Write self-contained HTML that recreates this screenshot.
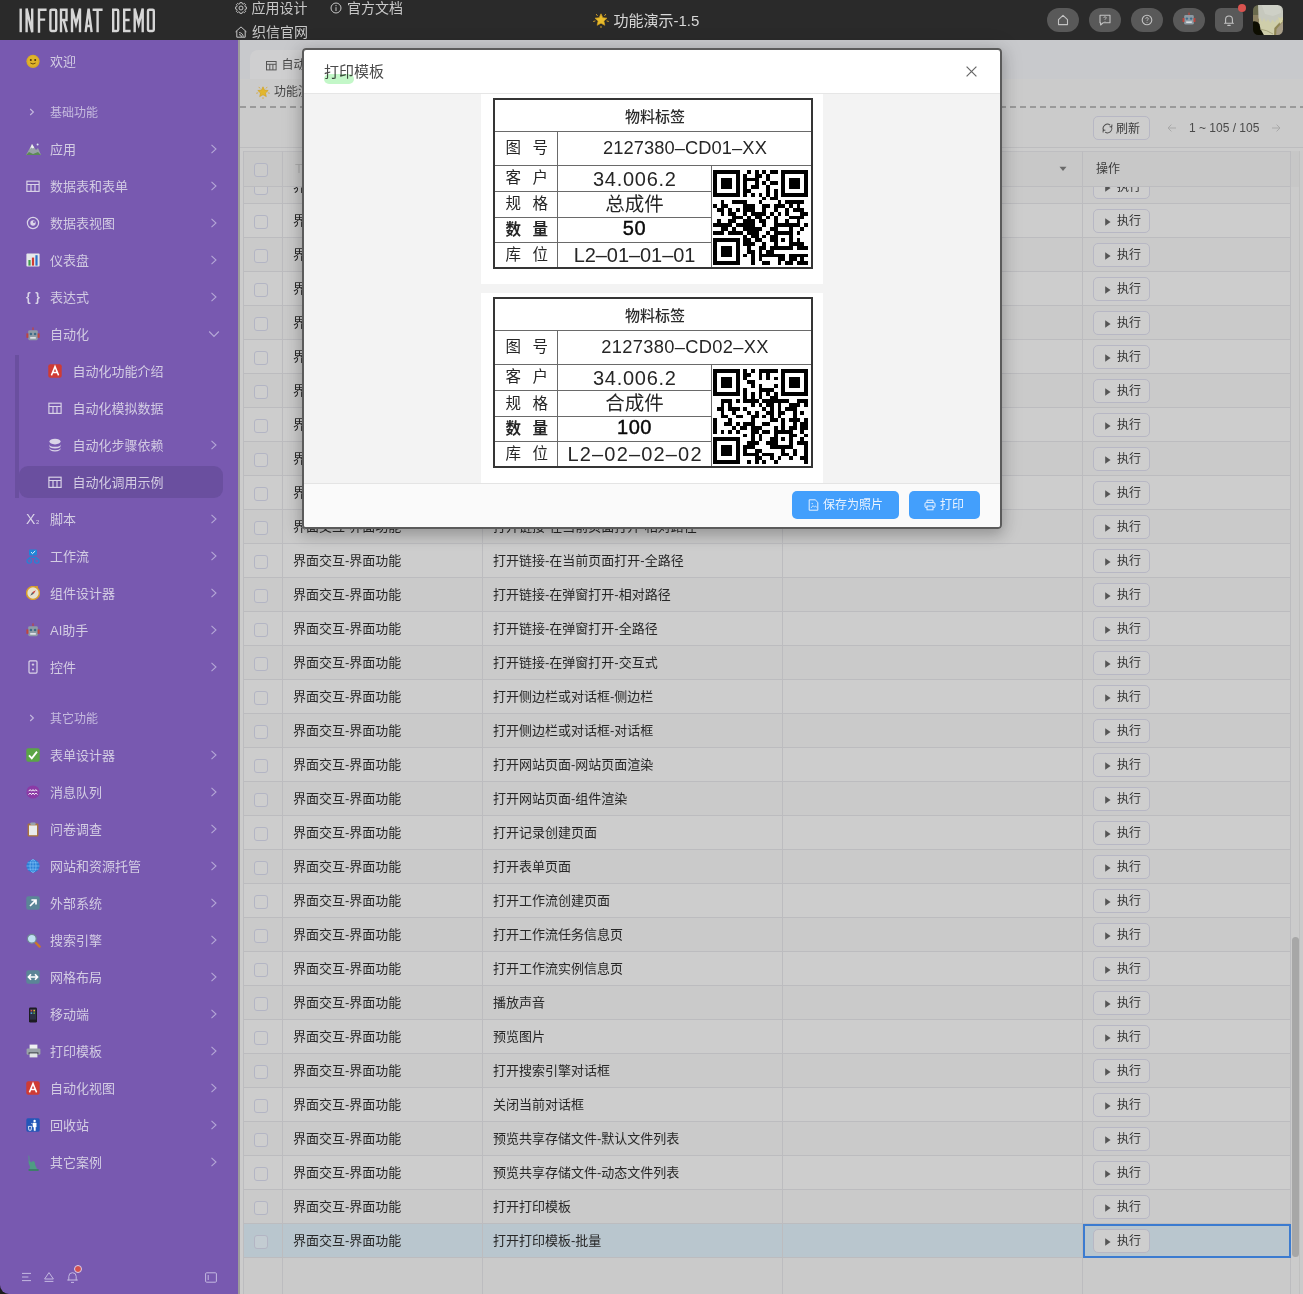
<!DOCTYPE html>
<html><head><meta charset="utf-8"><title>INFORMAT DEMO</title><style>
html,body{margin:0;padding:0}
body{width:1303px;height:1294px;position:relative;overflow:hidden;background:#cbcbcb;font-family:"Liberation Sans","Noto Sans CJK SC",sans-serif;}
div,svg{position:absolute;box-sizing:border-box}
.t{white-space:nowrap;overflow:hidden}
</style></head><body>
<div style="left:238px;top:40px;width:2px;height:1254px;background:#9d9b9b"></div>
<div style="left:240px;top:40px;width:1063px;height:67px;background:#c8c9cc"></div>
<div style="left:250px;top:50px;width:120px;height:29px;background:#cfcfd0;border-radius:8px 8px 0 0"></div>
<svg style="left:266px;top:60.5px;" width="11" height="10" viewBox="0 0 11 10"><g fill="none" stroke="#555" stroke-width="1"><rect x=".5" y=".5" width="9.6" height="8.4"/><path d="M.5 3.3h9.6M3.8 3.3v5.6M6.9 3.3v5.6"/></g></svg>
<div class="t" style="left:281.5px;top:55.5px;height:19px;line-height:19px;font-size:12px;color:#444;">自动化调用示例</div>
<div style="left:240px;top:79px;width:1063px;height:28px;background:#cbcbcb"></div>
<svg style="left:256px;top:85px;" width="14" height="14" viewBox="0 0 14 14"><path d="M7 1.8l1.5 3.3 3.7.4-2.7 2.5.8 3.6L7 9.8 3.7 11.6l.8-3.6L1.8 5.5l3.7-.4z" fill="#e2b62b" stroke="#cf9d1f" stroke-width=".6" stroke-linejoin="round"/><path d="M3 2.2l.8 1M11 2.2l-.8 1M.6 8.2l1.2-.3M13.4 8.2l-1.2-.3M7 13.6v-1.1" stroke="#dba528" stroke-width=".8" stroke-linecap="round"/></svg>
<div class="t" style="left:274px;top:83px;height:18px;line-height:18px;font-size:12px;color:#444;">功能演示-1.5</div>
<div style="left:240px;top:106px;width:1063px;height:2px;background:repeating-linear-gradient(90deg,#9a9a9a 0 6px,transparent 6px 10px)"></div>
<div style="left:240px;top:108px;width:1063px;height:39px;background:#cbcbcb"></div>
<div style="left:240px;top:147px;width:1063px;height:1px;background:#bdbdbf"></div>
<div style="left:240px;top:148px;width:1063px;height:1146px;background:#cccccc"></div>
<div style="left:1093px;top:116px;width:57px;height:24px;border:1px solid #b7b7c4;border-radius:5px;background:#cdcdcd"></div>
<svg style="left:1102px;top:123px;" width="11" height="11" viewBox="0 0 11 11"><g fill="none" stroke="#4a4a4a" stroke-width="1"><circle cx="5.5" cy="5.5" r="4.3" stroke-dasharray="11.7 1.8" transform="rotate(-38 5.5 5.5)"/><path d="M9.9 1.5v2.3H7.6M1.1 9.5V7.2h2.3" stroke-width=".9"/></g></svg>
<div class="t" style="left:1116px;top:117.5px;height:22px;line-height:22px;font-size:12px;color:#3c3c3c;">刷新</div>
<svg style="left:1167px;top:123px;" width="10" height="10" viewBox="0 0 10 10"><path d="M9 5H1.2M4.4 1.6L1 5l3.4 3.4" fill="none" stroke="#a9a9a9" stroke-width="1"/></svg>
<div class="t" style="left:1189px;top:117px;height:22px;line-height:22px;font-size:12px;color:#4a4a4a;">1 ~ 105 / 105</div>
<svg style="left:1271px;top:123px;" width="10" height="10" viewBox="0 0 10 10"><path d="M1 5h7.8M5.6 1.6L9 5 5.6 8.4" fill="none" stroke="#a9a9a9" stroke-width="1"/></svg>
<div style="left:243px;top:151px;width:1047.5px;height:36px;background:#c8c8c8"></div>
<div style="left:243px;top:170px;width:1047.5px;height:33px;background:#cacaca"></div>
<div style="left:243px;top:169px;width:1047.5px;height:1px;background:#bcbcbf"></div>
<div style="left:254px;top:181px;width:14px;height:14px;border:1px solid #b3b5c4;border-radius:3px;background:#cecece"></div>
<div class="t" style="left:293px;top:177px;height:20px;line-height:20px;font-size:13px;color:#272727;">界面交互-界面功能</div>
<div class="t" style="left:493px;top:177px;height:20px;line-height:20px;font-size:13px;color:#272727;"></div>
<div style="left:1093px;top:175px;width:57px;height:24px;border:1px solid #b7b7c4;border-radius:5px;background:#cecece"></div>
<svg style="left:1104px;top:182.5px;" width="8" height="10" viewBox="0 0 8 10"><path d="M1.2 1.2l5.4 3.8-5.4 3.8z" fill="#555"/></svg>
<div class="t" style="left:1117px;top:175.5px;height:22px;line-height:22px;font-size:12px;color:#333;">执行</div>
<div style="left:243px;top:204px;width:1047.5px;height:33px;background:#cdcdcd"></div>
<div style="left:243px;top:203px;width:1047.5px;height:1px;background:#bcbcbf"></div>
<div style="left:254px;top:215px;width:14px;height:14px;border:1px solid #b3b5c4;border-radius:3px;background:#cecece"></div>
<div class="t" style="left:293px;top:211px;height:20px;line-height:20px;font-size:13px;color:#272727;">界面交互-界面功能</div>
<div class="t" style="left:493px;top:211px;height:20px;line-height:20px;font-size:13px;color:#272727;"></div>
<div style="left:1093px;top:209px;width:57px;height:24px;border:1px solid #b7b7c4;border-radius:5px;background:#cecece"></div>
<svg style="left:1104px;top:216.5px;" width="8" height="10" viewBox="0 0 8 10"><path d="M1.2 1.2l5.4 3.8-5.4 3.8z" fill="#555"/></svg>
<div class="t" style="left:1117px;top:209.5px;height:22px;line-height:22px;font-size:12px;color:#333;">执行</div>
<div style="left:243px;top:238px;width:1047.5px;height:33px;background:#cacaca"></div>
<div style="left:243px;top:237px;width:1047.5px;height:1px;background:#bcbcbf"></div>
<div style="left:254px;top:249px;width:14px;height:14px;border:1px solid #b3b5c4;border-radius:3px;background:#cecece"></div>
<div class="t" style="left:293px;top:245px;height:20px;line-height:20px;font-size:13px;color:#272727;">界面交互-界面功能</div>
<div class="t" style="left:493px;top:245px;height:20px;line-height:20px;font-size:13px;color:#272727;"></div>
<div style="left:1093px;top:243px;width:57px;height:24px;border:1px solid #b7b7c4;border-radius:5px;background:#cecece"></div>
<svg style="left:1104px;top:250.5px;" width="8" height="10" viewBox="0 0 8 10"><path d="M1.2 1.2l5.4 3.8-5.4 3.8z" fill="#555"/></svg>
<div class="t" style="left:1117px;top:243.5px;height:22px;line-height:22px;font-size:12px;color:#333;">执行</div>
<div style="left:243px;top:272px;width:1047.5px;height:33px;background:#cdcdcd"></div>
<div style="left:243px;top:271px;width:1047.5px;height:1px;background:#bcbcbf"></div>
<div style="left:254px;top:283px;width:14px;height:14px;border:1px solid #b3b5c4;border-radius:3px;background:#cecece"></div>
<div class="t" style="left:293px;top:279px;height:20px;line-height:20px;font-size:13px;color:#272727;">界面交互-界面功能</div>
<div class="t" style="left:493px;top:279px;height:20px;line-height:20px;font-size:13px;color:#272727;"></div>
<div style="left:1093px;top:277px;width:57px;height:24px;border:1px solid #b7b7c4;border-radius:5px;background:#cecece"></div>
<svg style="left:1104px;top:284.5px;" width="8" height="10" viewBox="0 0 8 10"><path d="M1.2 1.2l5.4 3.8-5.4 3.8z" fill="#555"/></svg>
<div class="t" style="left:1117px;top:277.5px;height:22px;line-height:22px;font-size:12px;color:#333;">执行</div>
<div style="left:243px;top:306px;width:1047.5px;height:33px;background:#cacaca"></div>
<div style="left:243px;top:305px;width:1047.5px;height:1px;background:#bcbcbf"></div>
<div style="left:254px;top:317px;width:14px;height:14px;border:1px solid #b3b5c4;border-radius:3px;background:#cecece"></div>
<div class="t" style="left:293px;top:313px;height:20px;line-height:20px;font-size:13px;color:#272727;">界面交互-界面功能</div>
<div class="t" style="left:493px;top:313px;height:20px;line-height:20px;font-size:13px;color:#272727;"></div>
<div style="left:1093px;top:311px;width:57px;height:24px;border:1px solid #b7b7c4;border-radius:5px;background:#cecece"></div>
<svg style="left:1104px;top:318.5px;" width="8" height="10" viewBox="0 0 8 10"><path d="M1.2 1.2l5.4 3.8-5.4 3.8z" fill="#555"/></svg>
<div class="t" style="left:1117px;top:311.5px;height:22px;line-height:22px;font-size:12px;color:#333;">执行</div>
<div style="left:243px;top:340px;width:1047.5px;height:33px;background:#cdcdcd"></div>
<div style="left:243px;top:339px;width:1047.5px;height:1px;background:#bcbcbf"></div>
<div style="left:254px;top:351px;width:14px;height:14px;border:1px solid #b3b5c4;border-radius:3px;background:#cecece"></div>
<div class="t" style="left:293px;top:347px;height:20px;line-height:20px;font-size:13px;color:#272727;">界面交互-界面功能</div>
<div class="t" style="left:493px;top:347px;height:20px;line-height:20px;font-size:13px;color:#272727;"></div>
<div style="left:1093px;top:345px;width:57px;height:24px;border:1px solid #b7b7c4;border-radius:5px;background:#cecece"></div>
<svg style="left:1104px;top:352.5px;" width="8" height="10" viewBox="0 0 8 10"><path d="M1.2 1.2l5.4 3.8-5.4 3.8z" fill="#555"/></svg>
<div class="t" style="left:1117px;top:345.5px;height:22px;line-height:22px;font-size:12px;color:#333;">执行</div>
<div style="left:243px;top:374px;width:1047.5px;height:33px;background:#cacaca"></div>
<div style="left:243px;top:373px;width:1047.5px;height:1px;background:#bcbcbf"></div>
<div style="left:254px;top:385px;width:14px;height:14px;border:1px solid #b3b5c4;border-radius:3px;background:#cecece"></div>
<div class="t" style="left:293px;top:381px;height:20px;line-height:20px;font-size:13px;color:#272727;">界面交互-界面功能</div>
<div class="t" style="left:493px;top:381px;height:20px;line-height:20px;font-size:13px;color:#272727;"></div>
<div style="left:1093px;top:379px;width:57px;height:24px;border:1px solid #b7b7c4;border-radius:5px;background:#cecece"></div>
<svg style="left:1104px;top:386.5px;" width="8" height="10" viewBox="0 0 8 10"><path d="M1.2 1.2l5.4 3.8-5.4 3.8z" fill="#555"/></svg>
<div class="t" style="left:1117px;top:379.5px;height:22px;line-height:22px;font-size:12px;color:#333;">执行</div>
<div style="left:243px;top:408px;width:1047.5px;height:33px;background:#cdcdcd"></div>
<div style="left:243px;top:407px;width:1047.5px;height:1px;background:#bcbcbf"></div>
<div style="left:254px;top:419px;width:14px;height:14px;border:1px solid #b3b5c4;border-radius:3px;background:#cecece"></div>
<div class="t" style="left:293px;top:415px;height:20px;line-height:20px;font-size:13px;color:#272727;">界面交互-界面功能</div>
<div class="t" style="left:493px;top:415px;height:20px;line-height:20px;font-size:13px;color:#272727;"></div>
<div style="left:1093px;top:413px;width:57px;height:24px;border:1px solid #b7b7c4;border-radius:5px;background:#cecece"></div>
<svg style="left:1104px;top:420.5px;" width="8" height="10" viewBox="0 0 8 10"><path d="M1.2 1.2l5.4 3.8-5.4 3.8z" fill="#555"/></svg>
<div class="t" style="left:1117px;top:413.5px;height:22px;line-height:22px;font-size:12px;color:#333;">执行</div>
<div style="left:243px;top:442px;width:1047.5px;height:33px;background:#cacaca"></div>
<div style="left:243px;top:441px;width:1047.5px;height:1px;background:#bcbcbf"></div>
<div style="left:254px;top:453px;width:14px;height:14px;border:1px solid #b3b5c4;border-radius:3px;background:#cecece"></div>
<div class="t" style="left:293px;top:449px;height:20px;line-height:20px;font-size:13px;color:#272727;">界面交互-界面功能</div>
<div class="t" style="left:493px;top:449px;height:20px;line-height:20px;font-size:13px;color:#272727;"></div>
<div style="left:1093px;top:447px;width:57px;height:24px;border:1px solid #b7b7c4;border-radius:5px;background:#cecece"></div>
<svg style="left:1104px;top:454.5px;" width="8" height="10" viewBox="0 0 8 10"><path d="M1.2 1.2l5.4 3.8-5.4 3.8z" fill="#555"/></svg>
<div class="t" style="left:1117px;top:447.5px;height:22px;line-height:22px;font-size:12px;color:#333;">执行</div>
<div style="left:243px;top:476px;width:1047.5px;height:33px;background:#cdcdcd"></div>
<div style="left:243px;top:475px;width:1047.5px;height:1px;background:#bcbcbf"></div>
<div style="left:254px;top:487px;width:14px;height:14px;border:1px solid #b3b5c4;border-radius:3px;background:#cecece"></div>
<div class="t" style="left:293px;top:483px;height:20px;line-height:20px;font-size:13px;color:#272727;">界面交互-界面功能</div>
<div class="t" style="left:493px;top:483px;height:20px;line-height:20px;font-size:13px;color:#272727;"></div>
<div style="left:1093px;top:481px;width:57px;height:24px;border:1px solid #b7b7c4;border-radius:5px;background:#cecece"></div>
<svg style="left:1104px;top:488.5px;" width="8" height="10" viewBox="0 0 8 10"><path d="M1.2 1.2l5.4 3.8-5.4 3.8z" fill="#555"/></svg>
<div class="t" style="left:1117px;top:481.5px;height:22px;line-height:22px;font-size:12px;color:#333;">执行</div>
<div style="left:243px;top:510px;width:1047.5px;height:33px;background:#cacaca"></div>
<div style="left:243px;top:509px;width:1047.5px;height:1px;background:#bcbcbf"></div>
<div style="left:254px;top:521px;width:14px;height:14px;border:1px solid #b3b5c4;border-radius:3px;background:#cecece"></div>
<div class="t" style="left:293px;top:517px;height:20px;line-height:20px;font-size:13px;color:#272727;">界面交互-界面功能</div>
<div class="t" style="left:493px;top:517px;height:20px;line-height:20px;font-size:13px;color:#272727;">打开链接-在当前页面打开-相对路径</div>
<div style="left:1093px;top:515px;width:57px;height:24px;border:1px solid #b7b7c4;border-radius:5px;background:#cecece"></div>
<svg style="left:1104px;top:522.5px;" width="8" height="10" viewBox="0 0 8 10"><path d="M1.2 1.2l5.4 3.8-5.4 3.8z" fill="#555"/></svg>
<div class="t" style="left:1117px;top:515.5px;height:22px;line-height:22px;font-size:12px;color:#333;">执行</div>
<div style="left:243px;top:544px;width:1047.5px;height:33px;background:#cdcdcd"></div>
<div style="left:243px;top:543px;width:1047.5px;height:1px;background:#bcbcbf"></div>
<div style="left:254px;top:555px;width:14px;height:14px;border:1px solid #b3b5c4;border-radius:3px;background:#cecece"></div>
<div class="t" style="left:293px;top:551px;height:20px;line-height:20px;font-size:13px;color:#272727;">界面交互-界面功能</div>
<div class="t" style="left:493px;top:551px;height:20px;line-height:20px;font-size:13px;color:#272727;">打开链接-在当前页面打开-全路径</div>
<div style="left:1093px;top:549px;width:57px;height:24px;border:1px solid #b7b7c4;border-radius:5px;background:#cecece"></div>
<svg style="left:1104px;top:556.5px;" width="8" height="10" viewBox="0 0 8 10"><path d="M1.2 1.2l5.4 3.8-5.4 3.8z" fill="#555"/></svg>
<div class="t" style="left:1117px;top:549.5px;height:22px;line-height:22px;font-size:12px;color:#333;">执行</div>
<div style="left:243px;top:578px;width:1047.5px;height:33px;background:#cacaca"></div>
<div style="left:243px;top:577px;width:1047.5px;height:1px;background:#bcbcbf"></div>
<div style="left:254px;top:589px;width:14px;height:14px;border:1px solid #b3b5c4;border-radius:3px;background:#cecece"></div>
<div class="t" style="left:293px;top:585px;height:20px;line-height:20px;font-size:13px;color:#272727;">界面交互-界面功能</div>
<div class="t" style="left:493px;top:585px;height:20px;line-height:20px;font-size:13px;color:#272727;">打开链接-在弹窗打开-相对路径</div>
<div style="left:1093px;top:583px;width:57px;height:24px;border:1px solid #b7b7c4;border-radius:5px;background:#cecece"></div>
<svg style="left:1104px;top:590.5px;" width="8" height="10" viewBox="0 0 8 10"><path d="M1.2 1.2l5.4 3.8-5.4 3.8z" fill="#555"/></svg>
<div class="t" style="left:1117px;top:583.5px;height:22px;line-height:22px;font-size:12px;color:#333;">执行</div>
<div style="left:243px;top:612px;width:1047.5px;height:33px;background:#cdcdcd"></div>
<div style="left:243px;top:611px;width:1047.5px;height:1px;background:#bcbcbf"></div>
<div style="left:254px;top:623px;width:14px;height:14px;border:1px solid #b3b5c4;border-radius:3px;background:#cecece"></div>
<div class="t" style="left:293px;top:619px;height:20px;line-height:20px;font-size:13px;color:#272727;">界面交互-界面功能</div>
<div class="t" style="left:493px;top:619px;height:20px;line-height:20px;font-size:13px;color:#272727;">打开链接-在弹窗打开-全路径</div>
<div style="left:1093px;top:617px;width:57px;height:24px;border:1px solid #b7b7c4;border-radius:5px;background:#cecece"></div>
<svg style="left:1104px;top:624.5px;" width="8" height="10" viewBox="0 0 8 10"><path d="M1.2 1.2l5.4 3.8-5.4 3.8z" fill="#555"/></svg>
<div class="t" style="left:1117px;top:617.5px;height:22px;line-height:22px;font-size:12px;color:#333;">执行</div>
<div style="left:243px;top:646px;width:1047.5px;height:33px;background:#cacaca"></div>
<div style="left:243px;top:645px;width:1047.5px;height:1px;background:#bcbcbf"></div>
<div style="left:254px;top:657px;width:14px;height:14px;border:1px solid #b3b5c4;border-radius:3px;background:#cecece"></div>
<div class="t" style="left:293px;top:653px;height:20px;line-height:20px;font-size:13px;color:#272727;">界面交互-界面功能</div>
<div class="t" style="left:493px;top:653px;height:20px;line-height:20px;font-size:13px;color:#272727;">打开链接-在弹窗打开-交互式</div>
<div style="left:1093px;top:651px;width:57px;height:24px;border:1px solid #b7b7c4;border-radius:5px;background:#cecece"></div>
<svg style="left:1104px;top:658.5px;" width="8" height="10" viewBox="0 0 8 10"><path d="M1.2 1.2l5.4 3.8-5.4 3.8z" fill="#555"/></svg>
<div class="t" style="left:1117px;top:651.5px;height:22px;line-height:22px;font-size:12px;color:#333;">执行</div>
<div style="left:243px;top:680px;width:1047.5px;height:33px;background:#cdcdcd"></div>
<div style="left:243px;top:679px;width:1047.5px;height:1px;background:#bcbcbf"></div>
<div style="left:254px;top:691px;width:14px;height:14px;border:1px solid #b3b5c4;border-radius:3px;background:#cecece"></div>
<div class="t" style="left:293px;top:687px;height:20px;line-height:20px;font-size:13px;color:#272727;">界面交互-界面功能</div>
<div class="t" style="left:493px;top:687px;height:20px;line-height:20px;font-size:13px;color:#272727;">打开侧边栏或对话框-侧边栏</div>
<div style="left:1093px;top:685px;width:57px;height:24px;border:1px solid #b7b7c4;border-radius:5px;background:#cecece"></div>
<svg style="left:1104px;top:692.5px;" width="8" height="10" viewBox="0 0 8 10"><path d="M1.2 1.2l5.4 3.8-5.4 3.8z" fill="#555"/></svg>
<div class="t" style="left:1117px;top:685.5px;height:22px;line-height:22px;font-size:12px;color:#333;">执行</div>
<div style="left:243px;top:714px;width:1047.5px;height:33px;background:#cacaca"></div>
<div style="left:243px;top:713px;width:1047.5px;height:1px;background:#bcbcbf"></div>
<div style="left:254px;top:725px;width:14px;height:14px;border:1px solid #b3b5c4;border-radius:3px;background:#cecece"></div>
<div class="t" style="left:293px;top:721px;height:20px;line-height:20px;font-size:13px;color:#272727;">界面交互-界面功能</div>
<div class="t" style="left:493px;top:721px;height:20px;line-height:20px;font-size:13px;color:#272727;">打开侧边栏或对话框-对话框</div>
<div style="left:1093px;top:719px;width:57px;height:24px;border:1px solid #b7b7c4;border-radius:5px;background:#cecece"></div>
<svg style="left:1104px;top:726.5px;" width="8" height="10" viewBox="0 0 8 10"><path d="M1.2 1.2l5.4 3.8-5.4 3.8z" fill="#555"/></svg>
<div class="t" style="left:1117px;top:719.5px;height:22px;line-height:22px;font-size:12px;color:#333;">执行</div>
<div style="left:243px;top:748px;width:1047.5px;height:33px;background:#cdcdcd"></div>
<div style="left:243px;top:747px;width:1047.5px;height:1px;background:#bcbcbf"></div>
<div style="left:254px;top:759px;width:14px;height:14px;border:1px solid #b3b5c4;border-radius:3px;background:#cecece"></div>
<div class="t" style="left:293px;top:755px;height:20px;line-height:20px;font-size:13px;color:#272727;">界面交互-界面功能</div>
<div class="t" style="left:493px;top:755px;height:20px;line-height:20px;font-size:13px;color:#272727;">打开网站页面-网站页面渲染</div>
<div style="left:1093px;top:753px;width:57px;height:24px;border:1px solid #b7b7c4;border-radius:5px;background:#cecece"></div>
<svg style="left:1104px;top:760.5px;" width="8" height="10" viewBox="0 0 8 10"><path d="M1.2 1.2l5.4 3.8-5.4 3.8z" fill="#555"/></svg>
<div class="t" style="left:1117px;top:753.5px;height:22px;line-height:22px;font-size:12px;color:#333;">执行</div>
<div style="left:243px;top:782px;width:1047.5px;height:33px;background:#cacaca"></div>
<div style="left:243px;top:781px;width:1047.5px;height:1px;background:#bcbcbf"></div>
<div style="left:254px;top:793px;width:14px;height:14px;border:1px solid #b3b5c4;border-radius:3px;background:#cecece"></div>
<div class="t" style="left:293px;top:789px;height:20px;line-height:20px;font-size:13px;color:#272727;">界面交互-界面功能</div>
<div class="t" style="left:493px;top:789px;height:20px;line-height:20px;font-size:13px;color:#272727;">打开网站页面-组件渲染</div>
<div style="left:1093px;top:787px;width:57px;height:24px;border:1px solid #b7b7c4;border-radius:5px;background:#cecece"></div>
<svg style="left:1104px;top:794.5px;" width="8" height="10" viewBox="0 0 8 10"><path d="M1.2 1.2l5.4 3.8-5.4 3.8z" fill="#555"/></svg>
<div class="t" style="left:1117px;top:787.5px;height:22px;line-height:22px;font-size:12px;color:#333;">执行</div>
<div style="left:243px;top:816px;width:1047.5px;height:33px;background:#cdcdcd"></div>
<div style="left:243px;top:815px;width:1047.5px;height:1px;background:#bcbcbf"></div>
<div style="left:254px;top:827px;width:14px;height:14px;border:1px solid #b3b5c4;border-radius:3px;background:#cecece"></div>
<div class="t" style="left:293px;top:823px;height:20px;line-height:20px;font-size:13px;color:#272727;">界面交互-界面功能</div>
<div class="t" style="left:493px;top:823px;height:20px;line-height:20px;font-size:13px;color:#272727;">打开记录创建页面</div>
<div style="left:1093px;top:821px;width:57px;height:24px;border:1px solid #b7b7c4;border-radius:5px;background:#cecece"></div>
<svg style="left:1104px;top:828.5px;" width="8" height="10" viewBox="0 0 8 10"><path d="M1.2 1.2l5.4 3.8-5.4 3.8z" fill="#555"/></svg>
<div class="t" style="left:1117px;top:821.5px;height:22px;line-height:22px;font-size:12px;color:#333;">执行</div>
<div style="left:243px;top:850px;width:1047.5px;height:33px;background:#cacaca"></div>
<div style="left:243px;top:849px;width:1047.5px;height:1px;background:#bcbcbf"></div>
<div style="left:254px;top:861px;width:14px;height:14px;border:1px solid #b3b5c4;border-radius:3px;background:#cecece"></div>
<div class="t" style="left:293px;top:857px;height:20px;line-height:20px;font-size:13px;color:#272727;">界面交互-界面功能</div>
<div class="t" style="left:493px;top:857px;height:20px;line-height:20px;font-size:13px;color:#272727;">打开表单页面</div>
<div style="left:1093px;top:855px;width:57px;height:24px;border:1px solid #b7b7c4;border-radius:5px;background:#cecece"></div>
<svg style="left:1104px;top:862.5px;" width="8" height="10" viewBox="0 0 8 10"><path d="M1.2 1.2l5.4 3.8-5.4 3.8z" fill="#555"/></svg>
<div class="t" style="left:1117px;top:855.5px;height:22px;line-height:22px;font-size:12px;color:#333;">执行</div>
<div style="left:243px;top:884px;width:1047.5px;height:33px;background:#cdcdcd"></div>
<div style="left:243px;top:883px;width:1047.5px;height:1px;background:#bcbcbf"></div>
<div style="left:254px;top:895px;width:14px;height:14px;border:1px solid #b3b5c4;border-radius:3px;background:#cecece"></div>
<div class="t" style="left:293px;top:891px;height:20px;line-height:20px;font-size:13px;color:#272727;">界面交互-界面功能</div>
<div class="t" style="left:493px;top:891px;height:20px;line-height:20px;font-size:13px;color:#272727;">打开工作流创建页面</div>
<div style="left:1093px;top:889px;width:57px;height:24px;border:1px solid #b7b7c4;border-radius:5px;background:#cecece"></div>
<svg style="left:1104px;top:896.5px;" width="8" height="10" viewBox="0 0 8 10"><path d="M1.2 1.2l5.4 3.8-5.4 3.8z" fill="#555"/></svg>
<div class="t" style="left:1117px;top:889.5px;height:22px;line-height:22px;font-size:12px;color:#333;">执行</div>
<div style="left:243px;top:918px;width:1047.5px;height:33px;background:#cacaca"></div>
<div style="left:243px;top:917px;width:1047.5px;height:1px;background:#bcbcbf"></div>
<div style="left:254px;top:929px;width:14px;height:14px;border:1px solid #b3b5c4;border-radius:3px;background:#cecece"></div>
<div class="t" style="left:293px;top:925px;height:20px;line-height:20px;font-size:13px;color:#272727;">界面交互-界面功能</div>
<div class="t" style="left:493px;top:925px;height:20px;line-height:20px;font-size:13px;color:#272727;">打开工作流任务信息页</div>
<div style="left:1093px;top:923px;width:57px;height:24px;border:1px solid #b7b7c4;border-radius:5px;background:#cecece"></div>
<svg style="left:1104px;top:930.5px;" width="8" height="10" viewBox="0 0 8 10"><path d="M1.2 1.2l5.4 3.8-5.4 3.8z" fill="#555"/></svg>
<div class="t" style="left:1117px;top:923.5px;height:22px;line-height:22px;font-size:12px;color:#333;">执行</div>
<div style="left:243px;top:952px;width:1047.5px;height:33px;background:#cdcdcd"></div>
<div style="left:243px;top:951px;width:1047.5px;height:1px;background:#bcbcbf"></div>
<div style="left:254px;top:963px;width:14px;height:14px;border:1px solid #b3b5c4;border-radius:3px;background:#cecece"></div>
<div class="t" style="left:293px;top:959px;height:20px;line-height:20px;font-size:13px;color:#272727;">界面交互-界面功能</div>
<div class="t" style="left:493px;top:959px;height:20px;line-height:20px;font-size:13px;color:#272727;">打开工作流实例信息页</div>
<div style="left:1093px;top:957px;width:57px;height:24px;border:1px solid #b7b7c4;border-radius:5px;background:#cecece"></div>
<svg style="left:1104px;top:964.5px;" width="8" height="10" viewBox="0 0 8 10"><path d="M1.2 1.2l5.4 3.8-5.4 3.8z" fill="#555"/></svg>
<div class="t" style="left:1117px;top:957.5px;height:22px;line-height:22px;font-size:12px;color:#333;">执行</div>
<div style="left:243px;top:986px;width:1047.5px;height:33px;background:#cacaca"></div>
<div style="left:243px;top:985px;width:1047.5px;height:1px;background:#bcbcbf"></div>
<div style="left:254px;top:997px;width:14px;height:14px;border:1px solid #b3b5c4;border-radius:3px;background:#cecece"></div>
<div class="t" style="left:293px;top:993px;height:20px;line-height:20px;font-size:13px;color:#272727;">界面交互-界面功能</div>
<div class="t" style="left:493px;top:993px;height:20px;line-height:20px;font-size:13px;color:#272727;">播放声音</div>
<div style="left:1093px;top:991px;width:57px;height:24px;border:1px solid #b7b7c4;border-radius:5px;background:#cecece"></div>
<svg style="left:1104px;top:998.5px;" width="8" height="10" viewBox="0 0 8 10"><path d="M1.2 1.2l5.4 3.8-5.4 3.8z" fill="#555"/></svg>
<div class="t" style="left:1117px;top:991.5px;height:22px;line-height:22px;font-size:12px;color:#333;">执行</div>
<div style="left:243px;top:1020px;width:1047.5px;height:33px;background:#cdcdcd"></div>
<div style="left:243px;top:1019px;width:1047.5px;height:1px;background:#bcbcbf"></div>
<div style="left:254px;top:1031px;width:14px;height:14px;border:1px solid #b3b5c4;border-radius:3px;background:#cecece"></div>
<div class="t" style="left:293px;top:1027px;height:20px;line-height:20px;font-size:13px;color:#272727;">界面交互-界面功能</div>
<div class="t" style="left:493px;top:1027px;height:20px;line-height:20px;font-size:13px;color:#272727;">预览图片</div>
<div style="left:1093px;top:1025px;width:57px;height:24px;border:1px solid #b7b7c4;border-radius:5px;background:#cecece"></div>
<svg style="left:1104px;top:1032.5px;" width="8" height="10" viewBox="0 0 8 10"><path d="M1.2 1.2l5.4 3.8-5.4 3.8z" fill="#555"/></svg>
<div class="t" style="left:1117px;top:1025.5px;height:22px;line-height:22px;font-size:12px;color:#333;">执行</div>
<div style="left:243px;top:1054px;width:1047.5px;height:33px;background:#cacaca"></div>
<div style="left:243px;top:1053px;width:1047.5px;height:1px;background:#bcbcbf"></div>
<div style="left:254px;top:1065px;width:14px;height:14px;border:1px solid #b3b5c4;border-radius:3px;background:#cecece"></div>
<div class="t" style="left:293px;top:1061px;height:20px;line-height:20px;font-size:13px;color:#272727;">界面交互-界面功能</div>
<div class="t" style="left:493px;top:1061px;height:20px;line-height:20px;font-size:13px;color:#272727;">打开搜索引擎对话框</div>
<div style="left:1093px;top:1059px;width:57px;height:24px;border:1px solid #b7b7c4;border-radius:5px;background:#cecece"></div>
<svg style="left:1104px;top:1066.5px;" width="8" height="10" viewBox="0 0 8 10"><path d="M1.2 1.2l5.4 3.8-5.4 3.8z" fill="#555"/></svg>
<div class="t" style="left:1117px;top:1059.5px;height:22px;line-height:22px;font-size:12px;color:#333;">执行</div>
<div style="left:243px;top:1088px;width:1047.5px;height:33px;background:#cdcdcd"></div>
<div style="left:243px;top:1087px;width:1047.5px;height:1px;background:#bcbcbf"></div>
<div style="left:254px;top:1099px;width:14px;height:14px;border:1px solid #b3b5c4;border-radius:3px;background:#cecece"></div>
<div class="t" style="left:293px;top:1095px;height:20px;line-height:20px;font-size:13px;color:#272727;">界面交互-界面功能</div>
<div class="t" style="left:493px;top:1095px;height:20px;line-height:20px;font-size:13px;color:#272727;">关闭当前对话框</div>
<div style="left:1093px;top:1093px;width:57px;height:24px;border:1px solid #b7b7c4;border-radius:5px;background:#cecece"></div>
<svg style="left:1104px;top:1100.5px;" width="8" height="10" viewBox="0 0 8 10"><path d="M1.2 1.2l5.4 3.8-5.4 3.8z" fill="#555"/></svg>
<div class="t" style="left:1117px;top:1093.5px;height:22px;line-height:22px;font-size:12px;color:#333;">执行</div>
<div style="left:243px;top:1122px;width:1047.5px;height:33px;background:#cacaca"></div>
<div style="left:243px;top:1121px;width:1047.5px;height:1px;background:#bcbcbf"></div>
<div style="left:254px;top:1133px;width:14px;height:14px;border:1px solid #b3b5c4;border-radius:3px;background:#cecece"></div>
<div class="t" style="left:293px;top:1129px;height:20px;line-height:20px;font-size:13px;color:#272727;">界面交互-界面功能</div>
<div class="t" style="left:493px;top:1129px;height:20px;line-height:20px;font-size:13px;color:#272727;">预览共享存储文件-默认文件列表</div>
<div style="left:1093px;top:1127px;width:57px;height:24px;border:1px solid #b7b7c4;border-radius:5px;background:#cecece"></div>
<svg style="left:1104px;top:1134.5px;" width="8" height="10" viewBox="0 0 8 10"><path d="M1.2 1.2l5.4 3.8-5.4 3.8z" fill="#555"/></svg>
<div class="t" style="left:1117px;top:1127.5px;height:22px;line-height:22px;font-size:12px;color:#333;">执行</div>
<div style="left:243px;top:1156px;width:1047.5px;height:33px;background:#cdcdcd"></div>
<div style="left:243px;top:1155px;width:1047.5px;height:1px;background:#bcbcbf"></div>
<div style="left:254px;top:1167px;width:14px;height:14px;border:1px solid #b3b5c4;border-radius:3px;background:#cecece"></div>
<div class="t" style="left:293px;top:1163px;height:20px;line-height:20px;font-size:13px;color:#272727;">界面交互-界面功能</div>
<div class="t" style="left:493px;top:1163px;height:20px;line-height:20px;font-size:13px;color:#272727;">预览共享存储文件-动态文件列表</div>
<div style="left:1093px;top:1161px;width:57px;height:24px;border:1px solid #b7b7c4;border-radius:5px;background:#cecece"></div>
<svg style="left:1104px;top:1168.5px;" width="8" height="10" viewBox="0 0 8 10"><path d="M1.2 1.2l5.4 3.8-5.4 3.8z" fill="#555"/></svg>
<div class="t" style="left:1117px;top:1161.5px;height:22px;line-height:22px;font-size:12px;color:#333;">执行</div>
<div style="left:243px;top:1190px;width:1047.5px;height:33px;background:#cacaca"></div>
<div style="left:243px;top:1189px;width:1047.5px;height:1px;background:#bcbcbf"></div>
<div style="left:254px;top:1201px;width:14px;height:14px;border:1px solid #b3b5c4;border-radius:3px;background:#cecece"></div>
<div class="t" style="left:293px;top:1197px;height:20px;line-height:20px;font-size:13px;color:#272727;">界面交互-界面功能</div>
<div class="t" style="left:493px;top:1197px;height:20px;line-height:20px;font-size:13px;color:#272727;">打开打印模板</div>
<div style="left:1093px;top:1195px;width:57px;height:24px;border:1px solid #b7b7c4;border-radius:5px;background:#cecece"></div>
<svg style="left:1104px;top:1202.5px;" width="8" height="10" viewBox="0 0 8 10"><path d="M1.2 1.2l5.4 3.8-5.4 3.8z" fill="#555"/></svg>
<div class="t" style="left:1117px;top:1195.5px;height:22px;line-height:22px;font-size:12px;color:#333;">执行</div>
<div style="left:243px;top:1224px;width:1047.5px;height:33px;background:#b9c6ce"></div>
<div style="left:243px;top:1223px;width:1047.5px;height:1px;background:#bcbcbf"></div>
<div style="left:254px;top:1235px;width:14px;height:14px;border:1px solid #b3b5c4;border-radius:3px;background:#c3ccd2"></div>
<div class="t" style="left:293px;top:1231px;height:20px;line-height:20px;font-size:13px;color:#272727;">界面交互-界面功能</div>
<div class="t" style="left:493px;top:1231px;height:20px;line-height:20px;font-size:13px;color:#272727;">打开打印模板-批量</div>
<div style="left:1093px;top:1229px;width:57px;height:24px;border:1px solid #b7b7c4;border-radius:5px;background:#cecece"></div>
<svg style="left:1104px;top:1236.5px;" width="8" height="10" viewBox="0 0 8 10"><path d="M1.2 1.2l5.4 3.8-5.4 3.8z" fill="#555"/></svg>
<div class="t" style="left:1117px;top:1229.5px;height:22px;line-height:22px;font-size:12px;color:#333;">执行</div>
<div style="left:243px;top:1258px;width:1047.5px;height:36px;background:#cacaca"></div>
<div style="left:243px;top:1257px;width:1047.5px;height:1px;background:#bcbcbf"></div>
<div style="left:243px;top:151px;width:1047.5px;height:36px;background:#c8c8c8;border-top:1px solid #bebec1;border-bottom:1px solid #bcbcbf"></div>
<div style="left:254px;top:163px;width:14px;height:14px;border:1px solid #b3b5c4;border-radius:3px;background:#cbcbcb"></div>
<div class="t" style="left:295px;top:159px;height:20px;line-height:20px;font-size:13px;color:#adadad;">T</div>
<div class="t" style="left:1096px;top:159px;height:20px;line-height:20px;font-size:12px;color:#3d3d3d;">操作</div>
<svg style="left:1059px;top:166px;" width="8" height="6" viewBox="0 0 8 6"><path d="M.5 .8h7L4 5z" fill="#6a6a6a"/></svg>
<div style="left:243px;top:151px;width:1px;height:1143px;background:#bcbcbf"></div>
<div style="left:282px;top:151px;width:1px;height:1143px;background:#bcbcbf"></div>
<div style="left:482px;top:151px;width:1px;height:1143px;background:#bcbcbf"></div>
<div style="left:782px;top:151px;width:1px;height:1143px;background:#bcbcbf"></div>
<div style="left:1082px;top:151px;width:1px;height:1143px;background:#bcbcbf"></div>
<div style="left:1290px;top:151px;width:1px;height:1143px;background:#bcbcbf"></div>
<div style="left:1083px;top:1224px;width:208px;height:34px;border:2px solid #3b7bd0"></div>
<div style="left:1291px;top:151px;width:9px;height:1143px;background:#cbcbcb;border-right:1px solid #c0c0c0"></div>
<div style="left:1291px;top:151px;width:8px;height:36px;background:#c7c7c7"></div>
<div style="left:1292px;top:937px;width:7px;height:320px;background:#a7a7a7;border-radius:4px"></div>
<div style="left:1300px;top:151px;width:3px;height:1143px;background:#cbcbcb"></div>
<div style="left:0px;top:0px;width:1303px;height:40px;background:#2a2a2a"></div>
<svg style="left:0px;top:0px;" width="170" height="40" viewBox="0 0 170 40"><g fill="none" stroke="#d6d6d6" stroke-width="2.4" stroke-linejoin="miter"><path d="M20.7 8.6V32.2"/><path d="M26.6 32.2V8.6L32.2 32.2V8.6"/><path d="M39 32.800000000000004V9.799999999999999H46.6M39 19.6H45.2"/><rect x="50.4" y="9.799999999999999" width="5.800000000000004" height="21.200000000000003" rx="1.2"/><path d="M61 32.2V9.799999999999999H66.5V20H61M63.6 20L66.8 32.2"/><path d="M72 32.2V8.6L76 24L80 8.6V32.2"/><path d="M85.6 32.2L88.6 8.6L91.6 32.2M86.6 26H90.6"/><path d="M92.6 9.799999999999999H102.6M97.6 9.799999999999999V32.2"/><path d="M113.2 9.799999999999999V31.000000000000004H117Q118.2 31.000000000000004 118.2 29.800000000000004V11.0Q118.2 9.799999999999999 117 9.799999999999999Z"/><path d="M130.6 9.799999999999999H124.2V31.000000000000004H130.6M124.2 20H129.6"/><path d="M134.7 32.2V8.6L138.7 24L142.7 8.6V32.2"/><rect x="148" y="9.799999999999999" width="5.800000000000011" height="21.200000000000003" rx="1.2"/></g></svg>
<svg style="left:235px;top:1.6px;" width="12" height="12" viewBox="0 0 12 12"><g fill="none" stroke="#c8c8c8" stroke-width="1" stroke-linejoin="round"><path d="M5.15 0.36L6.85 0.36L7.08 1.63L8.32 2.14L9.39 1.42L10.58 2.61L9.86 3.68L10.37 4.92L11.64 5.15L11.64 6.85L10.37 7.08L9.86 8.32L10.58 9.39L9.39 10.58L8.32 9.86L7.08 10.37L6.85 11.64L5.15 11.64L4.92 10.37L3.68 9.86L2.61 10.58L1.42 9.39L2.14 8.32L1.63 7.08L0.36 6.85L0.36 5.15L1.63 4.92L2.14 3.68L1.42 2.61L2.61 1.42L3.68 2.14L4.92 1.63Z"/><circle cx="6" cy="6" r="2"/></g></svg>
<div class="t" style="left:251.5px;top:0px;height:17px;line-height:17px;font-size:14px;color:#c8c8c8;">应用设计</div>
<svg style="left:330px;top:2px;" width="12" height="12" viewBox="0 0 12 12"><g fill="none" stroke="#c8c8c8" stroke-width="1"><circle cx="6" cy="6" r="5"/><path d="M6 5.2V9M6 3v1.2"/></g></svg>
<div class="t" style="left:347px;top:0px;height:17px;line-height:17px;font-size:14px;color:#c8c8c8;">官方文档</div>
<svg style="left:235px;top:26px;" width="12" height="12" viewBox="0 0 12 12"><g fill="none" stroke="#c8c8c8" stroke-width="1"><path d="M.6 5.8L6 .9l5.4 4.9M1.8 4.9V11.2h8.4V4.9"/><path d="M4 8.6a2.2 2.2 0 0 1 2.4 2.4M4 6.6a4 4 0 0 1 4.2 4.2" stroke-width=".9"/></g></svg>
<div class="t" style="left:252px;top:24px;height:17px;line-height:17px;font-size:14px;color:#c8c8c8;">织信官网</div>
<svg style="left:593px;top:12.4px;" width="16" height="16" viewBox="0 0 16 16"><path d="M8 1.8l1.8 3.9 4.2.5-3.1 2.9.9 4.2L8 11.2l-3.8 2.1.9-4.2L2 6.2l4.2-.5z" fill="#e8bc2c" stroke="#cf9d1f" stroke-width=".7" stroke-linejoin="round"/><path d="M3.4 2.4l.9 1.2M12.6 2.4l-.9 1.2M.6 9.4l1.4-.4M15.4 9.4l-1.4-.4M8 15.6v-1.3" stroke="#e0a92a" stroke-width=".9" stroke-linecap="round"/></svg>
<div class="t" style="left:613.5px;top:11px;height:20px;line-height:20px;font-size:15px;color:#d8d8d8;">功能演示-1.5</div>
<div style="left:1047px;top:8px;width:32px;height:24px;background:#595959;border-radius:12px"></div>
<div style="left:1089px;top:8px;width:32px;height:24px;background:#595959;border-radius:12px"></div>
<div style="left:1131px;top:8px;width:32px;height:24px;background:#595959;border-radius:12px"></div>
<div style="left:1173px;top:8px;width:32px;height:24px;background:#595959;border-radius:12px"></div>
<div style="left:1215px;top:8px;width:28px;height:24px;background:#595959;border-radius:6px"></div>
<svg style="left:1057px;top:14px;" width="12" height="12" viewBox="0 0 12 12"><path d="M1.5 5.6L6 1.4l4.5 4.2V10.6H1.5z" fill="none" stroke="#c4c4c4" stroke-width="1.1" stroke-linejoin="round"/></svg>
<svg style="left:1099px;top:14px;" width="12" height="12" viewBox="0 0 12 12"><path d="M1 1.2h10v7.6H4L1.6 11V8.8H1z" fill="none" stroke="#c4c4c4" stroke-width="1.1" stroke-linejoin="round"/><path d="M4.8 3.8a1.2 1.1 0 1 1 1.6 1.1q-.4.2-.4.8M6 7v.6" fill="none" stroke="#c4c4c4" stroke-width=".9"/></svg>
<svg style="left:1141px;top:14px;" width="12" height="12" viewBox="0 0 12 12"><circle cx="6" cy="6" r="4.8" fill="none" stroke="#c4c4c4" stroke-width="1.1"/><path d="M4.7 4.7a1.3 1.2 0 1 1 1.8 1.2q-.5.2-.5.9M6 8v.7" fill="none" stroke="#c4c4c4" stroke-width=".9"/></svg>
<svg style="left:1182px;top:12px;" width="14" height="15" viewBox="0 0 14 15"><rect x="6.4" y="0.6" width="1.2" height="2.4" fill="#c0453c"/><rect x="2.2" y="3" width="9.6" height="9.6" rx="1.4" fill="#8d9aa3"/><rect x=".6" y="6" width="1.8" height="4" fill="#c0453c"/><rect x="11.6" y="6" width="1.8" height="4" fill="#c0453c"/><circle cx="4.9" cy="6.6" r="1.2" fill="#3f6d8a"/><circle cx="9.1" cy="6.6" r="1.2" fill="#3f6d8a"/><rect x="4.2" y="9.4" width="5.6" height="1.6" fill="#d8dde0"/></svg>
<svg style="left:1222px;top:13px;" width="14" height="14" viewBox="0 0 14 14"><path d="M2.6 10.2h8.8M3.6 10.2V6.4a3.4 3.4 0 0 1 6.8 0v3.8M5.8 12.4h2.4" fill="none" stroke="#c4c4c4" stroke-width="1.1" stroke-linecap="round"/></svg>
<div style="left:1238px;top:4px;width:8px;height:8px;background:#d9534f;border-radius:50%"></div>
<svg style="left:1253px;top:5px;" width="30" height="30" viewBox="0 0 30 30"><defs><clipPath id="avc"><rect width="30" height="30" rx="5.5"/></clipPath><filter id="avb" x="-10%" y="-10%" width="120%" height="120%"><feGaussianBlur stdDeviation=".7"/></filter></defs><g clip-path="url(#avc)"><g filter="url(#avb)"><rect x="-2" y="-2" width="34" height="34" fill="#cfceaa"/><rect x="-2" y="-2" width="9" height="14" fill="#6b6a4e"/><rect x="-2" y="10" width="8" height="8" fill="#8d8262"/><path d="M5 -2H32V13L28 12 26.5 16 24 14 22 17.5 19.5 14.5 17.5 18 15 14 13 17 11 13 9 17 7 12 5.5 14z" fill="#c6c8bd"/><path d="M8 -2H28V8L20 11 12 9z" fill="#d2d3cb" opacity=".7"/><path d="M-2 17Q4 15 6.5 19L7.5 24 12 32H-2z" fill="#0d0c05"/><path d="M7 24Q14 25 20 29" fill="none" stroke="#9d9a72" stroke-width=".8"/><path d="M21 32L21.5 23 29 15 32 15V32z" fill="#a79d87"/><path d="M21 32L21.5 23 29 15 30.5 16 23.5 24 23 32z" fill="#8f8652"/><path d="M25 12Q28 13 30 16L27 19z" fill="#d6d3a4"/></g></g></svg>
<div style="left:0px;top:40px;width:238px;height:1254px;background:#7859b0"></div>
<div style="left:0px;top:1282px;width:12px;height:12px;background:#1d1d1d"></div>
<div style="left:0px;top:40px;width:238px;height:1254px;background:#7859b0;border-radius:0 0 0 9px"></div>
<div style="left:15px;top:355px;width:4px;height:143px;background:#6a4f9f"></div>
<div style="left:19px;top:466px;width:204px;height:32px;background:#6a4f9f;border-radius:9px"></div>
<svg style="left:26px;top:54px;" width="14" height="14" viewBox="0 0 14 14"><circle cx="7" cy="7.3" r="6.6" fill="#d9ab26"/><circle cx="7" cy="7" r="5.2" fill="#e0b42a"/><circle cx="4.8" cy="6" r="1" fill="#4d3408"/><circle cx="9.2" cy="6" r="1" fill="#4d3408"/><path d="M4.4 9q2.6 2 5.2 0" fill="none" stroke="#5a3e0c" stroke-width=".9"/></svg>
<div class="t" style="left:50px;top:52px;height:20px;line-height:20px;font-size:13px;color:#d3cce3;">欢迎</div>
<svg style="left:29px;top:108px;" width="6" height="8" viewBox="0 0 6 8"><path d="M1.2 1L4.4 4 1.2 7" fill="none" stroke="#c4b9de" stroke-width="1.1"/></svg>
<div class="t" style="left:50px;top:103px;height:20px;line-height:20px;font-size:12px;color:#c6bbdf;">基础功能</div>
<svg style="left:26px;top:142px;" width="15" height="14" viewBox="0 0 15 14"><path d="M0 13L6 2l4 6 2-2 3 7z" fill="#9aa3a8"/><path d="M6 2l2.2 3.4-1.4 1-1.2-1-1.6 1.6z" fill="#f1f3f4"/><path d="M0 13l3-3 4 2 5-2 3 3z" fill="#5c8a55"/><circle cx="11.6" cy="2.4" r="1" fill="#dfe9f2"/></svg>
<div class="t" style="left:50px;top:140px;height:20px;line-height:20px;font-size:13px;color:#d3cce3;">应用</div>
<svg style="left:210px;top:143px;" width="8" height="12" viewBox="0 0 8 12"><path d="M1.5 1.8L6 6 1.5 10.2" fill="none" stroke="#b5a8d7" stroke-width="1.05"/></svg>
<svg style="left:26px;top:179px;" width="14" height="14" viewBox="0 0 14 14"><g fill="none" stroke="#dad4e8" stroke-width="1.15"><rect x=".9" y="2.2" width="12.2" height="10.2"/><path d="M.9 5.5h12.2M5 5.5v6.9M9 5.5v6.9"/></g></svg>
<div class="t" style="left:50px;top:177px;height:20px;line-height:20px;font-size:13px;color:#d3cce3;">数据表和表单</div>
<svg style="left:210px;top:180px;" width="8" height="12" viewBox="0 0 8 12"><path d="M1.5 1.8L6 6 1.5 10.2" fill="none" stroke="#b5a8d7" stroke-width="1.05"/></svg>
<svg style="left:26px;top:216px;" width="14" height="14" viewBox="0 0 14 14"><circle cx="7" cy="7" r="5.6" fill="none" stroke="#dad4e8" stroke-width="1.2"/><circle cx="7" cy="7" r="2.7" fill="#dad4e8"/><circle cx="8" cy="6" r="1" fill="#7859b0"/></svg>
<div class="t" style="left:50px;top:214px;height:20px;line-height:20px;font-size:13px;color:#d3cce3;">数据表视图</div>
<svg style="left:210px;top:217px;" width="8" height="12" viewBox="0 0 8 12"><path d="M1.5 1.8L6 6 1.5 10.2" fill="none" stroke="#b5a8d7" stroke-width="1.05"/></svg>
<svg style="left:26px;top:253px;" width="14" height="14" viewBox="0 0 14 14"><rect x=".4" y=".4" width="13.2" height="13.2" rx="1" fill="#e6e8ea"/><rect x="2.4" y="7" width="2.2" height="5.6" fill="#3f9a4c"/><rect x="5.9" y="4.6" width="2.2" height="8" fill="#d03b32"/><rect x="9.4" y="2.2" width="2.2" height="10.4" fill="#2a6fc9"/></svg>
<div class="t" style="left:50px;top:251px;height:20px;line-height:20px;font-size:13px;color:#d3cce3;">仪表盘</div>
<svg style="left:210px;top:254px;" width="8" height="12" viewBox="0 0 8 12"><path d="M1.5 1.8L6 6 1.5 10.2" fill="none" stroke="#b5a8d7" stroke-width="1.05"/></svg>
<div class="t" style="left:26px;top:288px;height:18px;line-height:18px;font-size:12px;color:#dad4e8;font-weight:bold;letter-spacing:.6px">{ }</div>
<div class="t" style="left:50px;top:288px;height:20px;line-height:20px;font-size:13px;color:#d3cce3;">表达式</div>
<svg style="left:210px;top:291px;" width="8" height="12" viewBox="0 0 8 12"><path d="M1.5 1.8L6 6 1.5 10.2" fill="none" stroke="#b5a8d7" stroke-width="1.05"/></svg>
<svg style="left:26px;top:327px;" width="14" height="16" viewBox="0 0 14 16"><rect x="6.4" y=".4" width="1.2" height="2.8" fill="#c0453c"/><rect x="2.2" y="3.2" width="9.6" height="10" rx="1.4" fill="#8f9ca6"/><rect x=".4" y="6.4" width="2" height="4.4" fill="#c0453c"/><rect x="11.6" y="6.4" width="2" height="4.4" fill="#c0453c"/><circle cx="4.9" cy="7" r="1.3" fill="#3d6b88"/><circle cx="9.1" cy="7" r="1.3" fill="#3d6b88"/><rect x="4.2" y="10" width="5.6" height="1.7" fill="#dfe3e6"/></svg>
<div class="t" style="left:50px;top:325px;height:20px;line-height:20px;font-size:13px;color:#d3cce3;">自动化</div>
<svg style="left:208px;top:330px;" width="12" height="8" viewBox="0 0 12 8"><path d="M1.2 1.5L6 6.3 10.8 1.5" fill="none" stroke="#b5a8d7" stroke-width="1.2"/></svg>
<svg style="left:48px;top:364px;" width="14" height="14" viewBox="0 0 14 14"><rect x=".3" y=".3" width="13.4" height="13.4" rx="2" fill="#cf3b34"/><path d="M3.4 11.4L7 2.6l3.6 8.8M4.7 8.4h4.6" fill="none" stroke="#fff" stroke-width="1.5"/></svg>
<div class="t" style="left:72.6px;top:362px;height:20px;line-height:20px;font-size:13px;color:#d3cce3;">自动化功能介绍</div>
<svg style="left:48px;top:401px;" width="14" height="14" viewBox="0 0 14 14"><g fill="none" stroke="#dad4e8" stroke-width="1.15"><rect x=".9" y="2.2" width="12.2" height="10.2"/><path d="M.9 5.5h12.2M5 5.5v6.9M9 5.5v6.9"/></g></svg>
<div class="t" style="left:72.6px;top:399px;height:20px;line-height:20px;font-size:13px;color:#d3cce3;">自动化模拟数据</div>
<svg style="left:48px;top:438px;" width="14" height="14" viewBox="0 0 14 14"><ellipse cx="7" cy="3.6" rx="5.6" ry="2.8" fill="#dad4e8"/><path d="M1.4 6.2q0 2.6 5.6 2.6t5.6-2.6v1.6q0 2.6-5.6 2.6T1.4 7.8zM1.4 9.6q0 2.6 5.6 2.6t5.6-2.6v1q0 2.8-5.6 2.8T1.4 10.6z" fill="#dad4e8"/></svg>
<div class="t" style="left:72.6px;top:436px;height:20px;line-height:20px;font-size:13px;color:#d3cce3;">自动化步骤依赖</div>
<svg style="left:210px;top:439px;" width="8" height="12" viewBox="0 0 8 12"><path d="M1.5 1.8L6 6 1.5 10.2" fill="none" stroke="#b5a8d7" stroke-width="1.05"/></svg>
<svg style="left:48px;top:475px;" width="14" height="14" viewBox="0 0 14 14"><g fill="none" stroke="#dad4e8" stroke-width="1.15"><rect x=".9" y="2.2" width="12.2" height="10.2"/><path d="M.9 5.5h12.2M5 5.5v6.9M9 5.5v6.9"/></g></svg>
<div class="t" style="left:72.6px;top:473px;height:20px;line-height:20px;font-size:13px;color:#d3cce3;">自动化调用示例</div>
<div class="t" style="left:26px;top:509px;height:20px;line-height:20px;font-size:14px;color:#dad4e8;">X</div>
<div class="t" style="left:36px;top:517px;height:10px;line-height:10px;font-size:6px;color:#dad4e8;">2</div>
<div class="t" style="left:50px;top:510px;height:20px;line-height:20px;font-size:13px;color:#d3cce3;">脚本</div>
<svg style="left:210px;top:513px;" width="8" height="12" viewBox="0 0 8 12"><path d="M1.5 1.8L6 6 1.5 10.2" fill="none" stroke="#b5a8d7" stroke-width="1.05"/></svg>
<svg style="left:26px;top:549px;" width="14" height="15" viewBox="0 0 14 15"><rect x="3" y=".4" width="8" height="6" rx=".8" fill="#1f86d8"/><path d="M5 3.2l1.5 1.4L9.2 2" fill="none" stroke="#fff" stroke-width=".9"/><path d="M7 6.4v2M3.2 10V8.4h7.6V10" fill="none" stroke="#1f86d8" stroke-width="1"/><circle cx="3.2" cy="12" r="2.2" fill="none" stroke="#1f86d8" stroke-width="1.1"/><circle cx="10.8" cy="12" r="2.2" fill="none" stroke="#1f86d8" stroke-width="1.1"/></svg>
<div class="t" style="left:50px;top:547px;height:20px;line-height:20px;font-size:13px;color:#d3cce3;">工作流</div>
<svg style="left:210px;top:550px;" width="8" height="12" viewBox="0 0 8 12"><path d="M1.5 1.8L6 6 1.5 10.2" fill="none" stroke="#b5a8d7" stroke-width="1.05"/></svg>
<svg style="left:26px;top:586px;" width="14" height="14" viewBox="0 0 14 14"><circle cx="7" cy="7" r="6.4" fill="#e8e2cf" stroke="#d9a02a" stroke-width="1.5"/><path d="M9.8 4.2L7.8 7.8 6.2 6.2z" fill="#cf3b34"/><path d="M4.2 9.8l2-3.6 1.6 1.6z" fill="#55606a"/><rect x="9.6" y="0" width="2.4" height="2" rx=".6" fill="#d9a02a"/></svg>
<div class="t" style="left:50px;top:584px;height:20px;line-height:20px;font-size:13px;color:#d3cce3;">组件设计器</div>
<svg style="left:210px;top:587px;" width="8" height="12" viewBox="0 0 8 12"><path d="M1.5 1.8L6 6 1.5 10.2" fill="none" stroke="#b5a8d7" stroke-width="1.05"/></svg>
<svg style="left:26px;top:623px;" width="14" height="16" viewBox="0 0 14 16"><rect x="6.4" y=".4" width="1.2" height="2.8" fill="#c0453c"/><rect x="2.2" y="3.2" width="9.6" height="10" rx="1.4" fill="#8f9ca6"/><rect x=".4" y="6.4" width="2" height="4.4" fill="#c0453c"/><rect x="11.6" y="6.4" width="2" height="4.4" fill="#c0453c"/><circle cx="4.9" cy="7" r="1.3" fill="#3d6b88"/><circle cx="9.1" cy="7" r="1.3" fill="#3d6b88"/><rect x="4.2" y="10" width="5.6" height="1.7" fill="#dfe3e6"/></svg>
<div class="t" style="left:50px;top:621px;height:20px;line-height:20px;font-size:13px;color:#d3cce3;">AI助手</div>
<svg style="left:210px;top:624px;" width="8" height="12" viewBox="0 0 8 12"><path d="M1.5 1.8L6 6 1.5 10.2" fill="none" stroke="#b5a8d7" stroke-width="1.05"/></svg>
<svg style="left:26px;top:660px;" width="14" height="14" viewBox="0 0 14 14"><rect x="3" y=".9" width="8" height="12.2" rx="1" fill="none" stroke="#dad4e8" stroke-width="1.2"/><path d="M7 3.4v2.4M5.8 4.6h2.4" stroke="#dad4e8" stroke-width="1"/><circle cx="7" cy="9.6" r="1" fill="#dad4e8"/></svg>
<div class="t" style="left:50px;top:658px;height:20px;line-height:20px;font-size:13px;color:#d3cce3;">控件</div>
<svg style="left:210px;top:661px;" width="8" height="12" viewBox="0 0 8 12"><path d="M1.5 1.8L6 6 1.5 10.2" fill="none" stroke="#b5a8d7" stroke-width="1.05"/></svg>
<svg style="left:29px;top:714px;" width="6" height="8" viewBox="0 0 6 8"><path d="M1.2 1L4.4 4 1.2 7" fill="none" stroke="#c4b9de" stroke-width="1.1"/></svg>
<div class="t" style="left:50px;top:709px;height:20px;line-height:20px;font-size:12px;color:#c6bbdf;">其它功能</div>
<svg style="left:26px;top:748px;" width="14" height="14" viewBox="0 0 14 14"><rect x=".3" y=".3" width="13.4" height="13.4" rx="2" fill="#5aa546"/><path d="M3 7.4l2.8 3L11 3.6" fill="none" stroke="#fff" stroke-width="1.8"/></svg>
<div class="t" style="left:50px;top:746px;height:20px;line-height:20px;font-size:13px;color:#d3cce3;">表单设计器</div>
<svg style="left:210px;top:749px;" width="8" height="12" viewBox="0 0 8 12"><path d="M1.5 1.8L6 6 1.5 10.2" fill="none" stroke="#b5a8d7" stroke-width="1.05"/></svg>
<svg style="left:26px;top:785px;" width="14" height="14" viewBox="0 0 14 14"><circle cx="7" cy="7" r="6.6" fill="#8b3aa6"/><path d="M2.6 6.2l1.6-1.6 1.4 1.6 1.4-1.6 1.4 1.6 1.4-1.6 1.6 1.6M2.6 9.6l1.6-1.6 1.4 1.6L7 8l1.4 1.6L9.8 8l1.6 1.6" fill="none" stroke="#fff" stroke-width="1"/></svg>
<div class="t" style="left:50px;top:783px;height:20px;line-height:20px;font-size:13px;color:#d3cce3;">消息队列</div>
<svg style="left:210px;top:786px;" width="8" height="12" viewBox="0 0 8 12"><path d="M1.5 1.8L6 6 1.5 10.2" fill="none" stroke="#b5a8d7" stroke-width="1.05"/></svg>
<svg style="left:26px;top:822px;" width="14" height="15" viewBox="0 0 14 15"><rect x="1.6" y="1.6" width="10.8" height="13" rx="1" fill="#a8733e"/><rect x="3" y="3.4" width="8" height="9.8" fill="#e9ebec"/><rect x="4.4" y=".4" width="5.2" height="2.6" rx=".8" fill="#9aa3a8"/></svg>
<div class="t" style="left:50px;top:820px;height:20px;line-height:20px;font-size:13px;color:#d3cce3;">问卷调查</div>
<svg style="left:210px;top:823px;" width="8" height="12" viewBox="0 0 8 12"><path d="M1.5 1.8L6 6 1.5 10.2" fill="none" stroke="#b5a8d7" stroke-width="1.05"/></svg>
<svg style="left:26px;top:859px;" width="14" height="14" viewBox="0 0 14 14"><circle cx="7" cy="7" r="6.5" fill="#2a7fd6"/><g fill="none" stroke="#7ec0f5" stroke-width=".7"><ellipse cx="7" cy="7" rx="3" ry="6.5"/><path d="M.5 7h13M7 .5v13M1.6 3.8h10.8M1.6 10.2h10.8"/></g></svg>
<div class="t" style="left:50px;top:857px;height:20px;line-height:20px;font-size:13px;color:#d3cce3;">网站和资源托管</div>
<svg style="left:210px;top:860px;" width="8" height="12" viewBox="0 0 8 12"><path d="M1.5 1.8L6 6 1.5 10.2" fill="none" stroke="#b5a8d7" stroke-width="1.05"/></svg>
<svg style="left:26px;top:896px;" width="14" height="14" viewBox="0 0 14 14"><rect x=".3" y=".3" width="13.4" height="13.4" rx="2" fill="#5b8597"/><path d="M4 10l5.6-5.6M5.4 4h4.6v4.6" fill="none" stroke="#fff" stroke-width="1.7"/></svg>
<div class="t" style="left:50px;top:894px;height:20px;line-height:20px;font-size:13px;color:#d3cce3;">外部系统</div>
<svg style="left:210px;top:897px;" width="8" height="12" viewBox="0 0 8 12"><path d="M1.5 1.8L6 6 1.5 10.2" fill="none" stroke="#b5a8d7" stroke-width="1.05"/></svg>
<svg style="left:26px;top:933px;" width="15" height="15" viewBox="0 0 15 15"><path d="M9 9l4.6 4.6" stroke="#c9772c" stroke-width="2.4" stroke-linecap="round"/><circle cx="5.8" cy="5.8" r="4.4" fill="#bfe0f2" stroke="#6f8794" stroke-width="1.2"/></svg>
<div class="t" style="left:50px;top:931px;height:20px;line-height:20px;font-size:13px;color:#d3cce3;">搜索引擎</div>
<svg style="left:210px;top:934px;" width="8" height="12" viewBox="0 0 8 12"><path d="M1.5 1.8L6 6 1.5 10.2" fill="none" stroke="#b5a8d7" stroke-width="1.05"/></svg>
<svg style="left:26px;top:970px;" width="14" height="14" viewBox="0 0 14 14"><rect x=".3" y=".3" width="13.4" height="13.4" rx="2" fill="#5b8597"/><path d="M2.6 7h8.8M5 4.2L2.4 7 5 9.8M9 4.2L11.6 7 9 9.8" fill="none" stroke="#fff" stroke-width="1.6"/></svg>
<div class="t" style="left:50px;top:968px;height:20px;line-height:20px;font-size:13px;color:#d3cce3;">网格布局</div>
<svg style="left:210px;top:971px;" width="8" height="12" viewBox="0 0 8 12"><path d="M1.5 1.8L6 6 1.5 10.2" fill="none" stroke="#b5a8d7" stroke-width="1.05"/></svg>
<svg style="left:26px;top:1007px;" width="14" height="16" viewBox="0 0 14 16"><rect x="3" y=".4" width="8" height="15.2" rx="1.4" fill="#1c1c22"/><rect x="4" y="2" width="6" height="10.6" fill="#2b2f45"/><rect x="4.6" y="2.8" width="1.6" height="1.6" fill="#d9534f"/><rect x="7.4" y="2.8" width="1.6" height="1.6" fill="#e9b92f"/><rect x="4.6" y="5.4" width="1.6" height="1.6" fill="#4da3e0"/><rect x="7.4" y="5.4" width="1.6" height="1.6" fill="#5aa546"/></svg>
<div class="t" style="left:50px;top:1005px;height:20px;line-height:20px;font-size:13px;color:#d3cce3;">移动端</div>
<svg style="left:210px;top:1008px;" width="8" height="12" viewBox="0 0 8 12"><path d="M1.5 1.8L6 6 1.5 10.2" fill="none" stroke="#b5a8d7" stroke-width="1.05"/></svg>
<svg style="left:26px;top:1044px;" width="15" height="14" viewBox="0 0 15 14"><rect x="3.6" y=".6" width="7.8" height="4.4" fill="#eef0f1"/><rect x=".6" y="4.4" width="13.8" height="6.4" rx="1.2" fill="#9aa3a8"/><rect x="2.6" y="8.4" width="9.8" height="2" fill="#3c4246"/><rect x="3.6" y="9.4" width="7.8" height="4" fill="#e2e5e7"/></svg>
<div class="t" style="left:50px;top:1042px;height:20px;line-height:20px;font-size:13px;color:#d3cce3;">打印模板</div>
<svg style="left:210px;top:1045px;" width="8" height="12" viewBox="0 0 8 12"><path d="M1.5 1.8L6 6 1.5 10.2" fill="none" stroke="#b5a8d7" stroke-width="1.05"/></svg>
<svg style="left:26px;top:1081px;" width="14" height="14" viewBox="0 0 14 14"><rect x=".3" y=".3" width="13.4" height="13.4" rx="2" fill="#cf3b34"/><path d="M3.4 11.4L7 2.6l3.6 8.8M4.7 8.4h4.6" fill="none" stroke="#fff" stroke-width="1.5"/></svg>
<div class="t" style="left:50px;top:1079px;height:20px;line-height:20px;font-size:13px;color:#d3cce3;">自动化视图</div>
<svg style="left:210px;top:1082px;" width="8" height="12" viewBox="0 0 8 12"><path d="M1.5 1.8L6 6 1.5 10.2" fill="none" stroke="#b5a8d7" stroke-width="1.05"/></svg>
<svg style="left:26px;top:1118px;" width="14" height="14" viewBox="0 0 14 14"><rect x=".3" y=".3" width="13.4" height="13.4" rx="1.6" fill="#2457b8"/><circle cx="8.6" cy="3" r="1.2" fill="#fff"/><path d="M7 5h3.2v4H9.4v3.6H8V9H7zM7 6.2L5 5.2" fill="#fff" stroke="#fff" stroke-width=".5"/><path d="M2.4 8.4h3.2l-.5 3.8H2.9z" fill="none" stroke="#fff" stroke-width=".8"/></svg>
<div class="t" style="left:50px;top:1116px;height:20px;line-height:20px;font-size:13px;color:#d3cce3;">回收站</div>
<svg style="left:210px;top:1119px;" width="8" height="12" viewBox="0 0 8 12"><path d="M1.5 1.8L6 6 1.5 10.2" fill="none" stroke="#b5a8d7" stroke-width="1.05"/></svg>
<svg style="left:26px;top:1155px;" width="14" height="16" viewBox="0 0 14 16"><path d="M2.2 0l1.2 1.6v4l2 1.8c.6-1.6 3-1.6 3.4.2l.4 2.4 1.6 3.6.8 2H3.4l.6-4-1.4-3.4V2z" fill="#4f9c83"/><rect x="2.6" y="14" width="10" height="2" fill="#3e7d69"/></svg>
<div class="t" style="left:50px;top:1153px;height:20px;line-height:20px;font-size:13px;color:#d3cce3;">其它案例</div>
<svg style="left:210px;top:1156px;" width="8" height="12" viewBox="0 0 8 12"><path d="M1.5 1.8L6 6 1.5 10.2" fill="none" stroke="#b5a8d7" stroke-width="1.05"/></svg>
<svg style="left:21px;top:1271px;" width="11" height="12" viewBox="0 0 11 12"><path d="M1 2.4h9M1 6h6.4M1 9.6h9" fill="none" stroke="#c4b9e1" stroke-width="1"/></svg>
<svg style="left:43px;top:1271px;" width="12" height="12" viewBox="0 0 12 12"><path d="M6 1.6L10.4 8H1.6zM1.6 10.4h8.8" fill="none" stroke="#c4b9e1" stroke-width="1"/></svg>
<svg style="left:66px;top:1270px;" width="13" height="14" viewBox="0 0 13 14"><path d="M1.6 10h9.8M2.8 10V6.4a3.7 3.7 0 0 1 7.4 0V10M5.4 12.4h2.2" fill="none" stroke="#c4b9e1" stroke-width="1" stroke-linecap="round"/></svg>
<div style="left:73.5px;top:1265px;width:8px;height:8px;background:#d5504c;border-radius:50%;border:1px solid #d9cfee"></div>
<svg style="left:205px;top:1271.5px;" width="12" height="11" viewBox="0 0 12 11"><rect x=".6" y=".8" width="10.8" height="9.4" rx="1" fill="none" stroke="#c4b9e1" stroke-width="1"/><path d="M3.2 3v5" stroke="#c4b9e1" stroke-width="1"/></svg>
<div style="left:302px;top:48px;width:700px;height:480.7px;background:#fff;border-radius:4px;box-shadow:0 5px 14px 1px rgba(0,0,0,.21),0 1px 22px 4px rgba(0,0,0,.07)"></div>
<div style="left:302px;top:48px;width:700px;height:480.7px;border:2px solid #5b5b5b;border-radius:4px;background:#fff"></div>
<div class="t" style="left:324px;top:61px;height:22px;line-height:22px;font-size:15px;color:#4b4b4b;">打印模板</div>
<div style="left:324px;top:74px;width:30px;height:10px;background:#c3f7c8;border-radius:5px;mix-blend-mode:multiply"></div>
<svg style="left:965.5px;top:66px;" width="11" height="11" viewBox="0 0 11 11"><path d="M.6 .6l9.8 9.8M10.4 .6l-9.8 9.8" fill="none" stroke="#666" stroke-width="1.2"/></svg>
<div style="left:304px;top:93px;width:696px;height:1px;background:#e6e6e6"></div>
<div style="left:304px;top:94px;width:696px;height:389px;background:#f3f3f3"></div>
<div style="left:304px;top:483px;width:696px;height:1px;background:#e4e4e4"></div>
<div style="left:304px;top:484px;width:696px;height:42.7px;background:#fafafa;border-radius:0 0 2px 2px"></div>
<div style="left:792px;top:491px;width:107px;height:28px;background:#439ffc;border-radius:5px"></div>
<svg style="left:808px;top:499px;" width="11" height="12" viewBox="0 0 11 12"><g fill="none" stroke="#eaf3ff" stroke-width="1"><path d="M1.2 .8h6l2.6 2.6v7.8H1.2z"/><path d="M3 9l2-2.4 1.4 1.4 1.2-1 1.2 1.6" stroke-width=".8"/><circle cx="4.2" cy="4.6" r=".7" fill="#eaf3ff" stroke="none"/></g></svg>
<div class="t" style="left:823px;top:494px;height:22px;line-height:22px;font-size:12px;color:#e9f3ff;">保存为照片</div>
<div style="left:909px;top:491px;width:71px;height:28px;background:#439ffc;border-radius:5px"></div>
<svg style="left:924px;top:499px;" width="12" height="12" viewBox="0 0 12 12"><g fill="none" stroke="#eaf3ff" stroke-width="1"><path d="M3 3.6V1.2h6v2.4"/><rect x="1" y="3.6" width="10" height="5" rx="1.2"/><rect x="3" y="7" width="6" height="3.8" fill="#439ffc"/></g></svg>
<div class="t" style="left:940px;top:494px;height:22px;line-height:22px;font-size:12px;color:#e9f3ff;">打印</div>
<div style="left:480.5px;top:93.5px;width:342px;height:190.3px;background:#fff"></div>
<div style="left:495px;top:130.6px;width:317px;height:1.1px;background:#6a6a6a"></div>
<div style="left:495px;top:164.7px;width:317px;height:1.1px;background:#6a6a6a"></div>
<div style="left:495px;top:191.0px;width:217px;height:1.1px;background:#6a6a6a"></div>
<div style="left:495px;top:217.1px;width:217px;height:1.1px;background:#6a6a6a"></div>
<div style="left:495px;top:242.1px;width:217px;height:1.1px;background:#6a6a6a"></div>
<div style="left:556.9px;top:131px;width:1.1px;height:137px;background:#6a6a6a"></div>
<div style="left:711px;top:165px;width:1.1px;height:103px;background:#6a6a6a"></div>
<div style="left:493.3px;top:98px;width:319.8px;height:171.4px;border:2.6px solid #353535"></div>
<div class="t" style="left:557px;top:106px;height:22px;line-height:22px;font-size:15px;width:196px;text-align:center;font-weight:500;color:#2a2a2a;">物料标签</div>
<div class="t" style="left:505.4px;top:137.2px;height:22px;line-height:22px;font-size:15.5px;color:#262626;">图</div>
<div class="t" style="left:532.4px;top:137.2px;height:22px;line-height:22px;font-size:15.5px;color:#262626;">号</div>
<div class="t" style="left:505.4px;top:167.3px;height:22px;line-height:22px;font-size:15.5px;color:#262626;">客</div>
<div class="t" style="left:532.4px;top:167.3px;height:22px;line-height:22px;font-size:15.5px;color:#262626;">户</div>
<div class="t" style="left:505.4px;top:193.4px;height:22px;line-height:22px;font-size:15.5px;color:#262626;">规</div>
<div class="t" style="left:532.4px;top:193.4px;height:22px;line-height:22px;font-size:15.5px;color:#262626;">格</div>
<div class="t" style="left:505.4px;top:218.8px;height:22px;line-height:22px;font-size:15.5px;font-weight:bold;color:#262626;">数</div>
<div class="t" style="left:532.4px;top:218.8px;height:22px;line-height:22px;font-size:15.5px;font-weight:bold;color:#262626;">量</div>
<div class="t" style="left:505.4px;top:243.6px;height:22px;line-height:22px;font-size:15.5px;color:#262626;">库</div>
<div class="t" style="left:532.4px;top:243.6px;height:22px;line-height:22px;font-size:15.5px;color:#262626;">位</div>
<div class="t" style="left:558px;top:135.7px;height:24px;line-height:24px;font-size:18.3px;color:#262626;width:254px;text-align:center;letter-spacing:0.08px">2127380–CD01–XX</div>
<div class="t" style="left:558px;top:167.2px;height:24px;line-height:24px;font-size:20px;color:#262626;width:153px;text-align:center;letter-spacing:.73px;text-indent:.7px">34.006.2</div>
<div class="t" style="left:558px;top:192px;height:24px;line-height:24px;font-size:19.5px;width:153px;text-align:center;color:#262626;">总成件</div>
<div class="t" style="left:558px;top:216px;height:24px;line-height:24px;font-size:20px;color:#0a0a0a;width:153px;text-align:center;-webkit-text-stroke:.45px #0a0a0a;letter-spacing:.6px">50</div>
<div class="t" style="left:558px;top:243px;height:24px;line-height:24px;font-size:20px;color:#262626;width:153px;text-align:center;letter-spacing:-0.06px;text-indent:0px">L2–01–01–01</div>
<svg style="left:713.1px;top:170px;shape-rendering:crispEdges" width="94.9" height="94.9" viewBox="0 0 25 25"><path d="M0 0h7v1h-7zM9 0h1v1h-1zM11 0h1v1h-1zM13 0h1v1h-1zM15 0h2v1h-2zM18 0h7v1h-7zM0 1h1v1h-1zM6 1h1v1h-1zM8 1h1v1h-1zM11 1h2v1h-2zM14 1h1v1h-1zM18 1h1v1h-1zM24 1h1v1h-1zM0 2h1v1h-1zM2 2h3v1h-3zM6 2h1v1h-1zM8 2h4v1h-4zM14 2h1v1h-1zM18 2h1v1h-1zM20 2h3v1h-3zM24 2h1v1h-1zM0 3h1v1h-1zM2 3h3v1h-3zM6 3h1v1h-1zM8 3h1v1h-1zM11 3h1v1h-1zM13 3h1v1h-1zM15 3h2v1h-2zM18 3h1v1h-1zM20 3h3v1h-3zM24 3h1v1h-1zM0 4h1v1h-1zM2 4h3v1h-3zM6 4h1v1h-1zM8 4h1v1h-1zM10 4h2v1h-2zM14 4h1v1h-1zM18 4h1v1h-1zM20 4h3v1h-3zM24 4h1v1h-1zM0 5h1v1h-1zM6 5h1v1h-1zM8 5h2v1h-2zM14 5h1v1h-1zM16 5h1v1h-1zM18 5h1v1h-1zM24 5h1v1h-1zM0 6h7v1h-7zM8 6h1v1h-1zM10 6h1v1h-1zM12 6h1v1h-1zM14 6h1v1h-1zM16 6h1v1h-1zM18 6h7v1h-7zM13 7h1v1h-1zM15 7h2v1h-2zM2 8h1v1h-1zM5 8h4v1h-4zM12 8h1v1h-1zM17 8h1v1h-1zM19 8h5v1h-5zM0 9h1v1h-1zM2 9h2v1h-2zM8 9h3v1h-3zM13 9h2v1h-2zM16 9h3v1h-3zM20 9h1v1h-1zM22 9h1v1h-1zM1 10h2v1h-2zM4 10h1v1h-1zM6 10h1v1h-1zM8 10h3v1h-3zM13 10h1v1h-1zM16 10h1v1h-1zM19 10h1v1h-1zM21 10h3v1h-3zM2 11h1v1h-1zM4 11h2v1h-2zM8 11h1v1h-1zM10 11h4v1h-4zM15 11h1v1h-1zM17 11h1v1h-1zM19 11h1v1h-1zM23 11h2v1h-2zM5 12h3v1h-3zM9 12h1v1h-1zM11 12h2v1h-2zM14 12h1v1h-1zM16 12h1v1h-1zM20 12h4v1h-4zM1 13h1v1h-1zM4 13h2v1h-2zM8 13h3v1h-3zM12 13h2v1h-2zM16 13h1v1h-1zM19 13h1v1h-1zM22 13h1v1h-1zM0 14h5v1h-5zM6 14h5v1h-5zM13 14h1v1h-1zM16 14h7v1h-7zM24 14h1v1h-1zM2 15h2v1h-2zM5 15h1v1h-1zM8 15h5v1h-5zM15 15h2v1h-2zM20 15h1v1h-1zM23 15h1v1h-1zM0 16h3v1h-3zM4 16h4v1h-4zM9 16h3v1h-3zM14 16h1v1h-1zM16 16h5v1h-5zM22 16h1v1h-1zM8 17h1v1h-1zM10 17h2v1h-2zM13 17h1v1h-1zM15 17h2v1h-2zM20 17h1v1h-1zM0 18h7v1h-7zM8 18h2v1h-2zM11 18h2v1h-2zM15 18h2v1h-2zM18 18h1v1h-1zM20 18h1v1h-1zM22 18h1v1h-1zM0 19h1v1h-1zM6 19h1v1h-1zM8 19h3v1h-3zM13 19h1v1h-1zM16 19h1v1h-1zM20 19h4v1h-4zM0 20h1v1h-1zM2 20h3v1h-3zM6 20h1v1h-1zM9 20h1v1h-1zM12 20h2v1h-2zM15 20h6v1h-6zM22 20h3v1h-3zM0 21h1v1h-1zM2 21h3v1h-3zM6 21h1v1h-1zM9 21h2v1h-2zM12 21h1v1h-1zM14 21h2v1h-2zM0 22h1v1h-1zM2 22h3v1h-3zM6 22h1v1h-1zM8 22h1v1h-1zM10 22h1v1h-1zM12 22h7v1h-7zM20 22h5v1h-5zM0 23h1v1h-1zM6 23h1v1h-1zM10 23h1v1h-1zM12 23h1v1h-1zM17 23h2v1h-2zM20 23h2v1h-2zM23 23h1v1h-1zM0 24h7v1h-7zM10 24h1v1h-1zM13 24h2v1h-2zM17 24h1v1h-1zM19 24h2v1h-2zM22 24h3v1h-3z" fill="#000"/></svg>
<div style="left:480.5px;top:292.6px;width:342px;height:190.3px;background:#fff"></div>
<div style="left:495px;top:329.7px;width:317px;height:1.1px;background:#6a6a6a"></div>
<div style="left:495px;top:363.79999999999995px;width:317px;height:1.1px;background:#6a6a6a"></div>
<div style="left:495px;top:390.1px;width:217px;height:1.1px;background:#6a6a6a"></div>
<div style="left:495px;top:416.2px;width:217px;height:1.1px;background:#6a6a6a"></div>
<div style="left:495px;top:441.2px;width:217px;height:1.1px;background:#6a6a6a"></div>
<div style="left:556.9px;top:330.1px;width:1.1px;height:137px;background:#6a6a6a"></div>
<div style="left:711px;top:364.1px;width:1.1px;height:103px;background:#6a6a6a"></div>
<div style="left:493.3px;top:297.1px;width:319.8px;height:171.4px;border:2.6px solid #353535"></div>
<div class="t" style="left:557px;top:305.1px;height:22px;line-height:22px;font-size:15px;width:196px;text-align:center;font-weight:500;color:#2a2a2a;">物料标签</div>
<div class="t" style="left:505.4px;top:336.29999999999995px;height:22px;line-height:22px;font-size:15.5px;color:#262626;">图</div>
<div class="t" style="left:532.4px;top:336.29999999999995px;height:22px;line-height:22px;font-size:15.5px;color:#262626;">号</div>
<div class="t" style="left:505.4px;top:366.4px;height:22px;line-height:22px;font-size:15.5px;color:#262626;">客</div>
<div class="t" style="left:532.4px;top:366.4px;height:22px;line-height:22px;font-size:15.5px;color:#262626;">户</div>
<div class="t" style="left:505.4px;top:392.5px;height:22px;line-height:22px;font-size:15.5px;color:#262626;">规</div>
<div class="t" style="left:532.4px;top:392.5px;height:22px;line-height:22px;font-size:15.5px;color:#262626;">格</div>
<div class="t" style="left:505.4px;top:417.9px;height:22px;line-height:22px;font-size:15.5px;font-weight:bold;color:#262626;">数</div>
<div class="t" style="left:532.4px;top:417.9px;height:22px;line-height:22px;font-size:15.5px;font-weight:bold;color:#262626;">量</div>
<div class="t" style="left:505.4px;top:442.7px;height:22px;line-height:22px;font-size:15.5px;color:#262626;">库</div>
<div class="t" style="left:532.4px;top:442.7px;height:22px;line-height:22px;font-size:15.5px;color:#262626;">位</div>
<div class="t" style="left:558px;top:334.79999999999995px;height:24px;line-height:24px;font-size:18.3px;color:#262626;width:254px;text-align:center;letter-spacing:0.32px">2127380–CD02–XX</div>
<div class="t" style="left:558px;top:366.29999999999995px;height:24px;line-height:24px;font-size:20px;color:#262626;width:153px;text-align:center;letter-spacing:.73px;text-indent:.7px">34.006.2</div>
<div class="t" style="left:558px;top:391.1px;height:24px;line-height:24px;font-size:19.5px;width:153px;text-align:center;color:#262626;">合成件</div>
<div class="t" style="left:558px;top:415.1px;height:24px;line-height:24px;font-size:20px;color:#0a0a0a;width:153px;text-align:center;-webkit-text-stroke:.45px #0a0a0a;letter-spacing:.6px">100</div>
<div class="t" style="left:558px;top:442.1px;height:24px;line-height:24px;font-size:20px;color:#262626;width:153px;text-align:center;letter-spacing:1.17px;text-indent:1.17px">L2–02–02–02</div>
<svg style="left:713.1px;top:369.1px;shape-rendering:crispEdges" width="94.9" height="94.9" viewBox="0 0 25 25"><path d="M0 0h7v1h-7zM8 0h1v1h-1zM10 0h1v1h-1zM12 0h5v1h-5zM18 0h7v1h-7zM0 1h1v1h-1zM6 1h1v1h-1zM8 1h2v1h-2zM12 1h1v1h-1zM14 1h1v1h-1zM18 1h1v1h-1zM24 1h1v1h-1zM0 2h1v1h-1zM2 2h3v1h-3zM6 2h1v1h-1zM8 2h1v1h-1zM12 2h1v1h-1zM14 2h1v1h-1zM16 2h1v1h-1zM18 2h1v1h-1zM20 2h3v1h-3zM24 2h1v1h-1zM0 3h1v1h-1zM2 3h3v1h-3zM6 3h1v1h-1zM9 3h2v1h-2zM18 3h1v1h-1zM20 3h3v1h-3zM24 3h1v1h-1zM0 4h1v1h-1zM2 4h3v1h-3zM6 4h1v1h-1zM10 4h1v1h-1zM12 4h1v1h-1zM16 4h1v1h-1zM18 4h1v1h-1zM20 4h3v1h-3zM24 4h1v1h-1zM0 5h1v1h-1zM6 5h1v1h-1zM8 5h1v1h-1zM12 5h4v1h-4zM18 5h1v1h-1zM24 5h1v1h-1zM0 6h7v1h-7zM8 6h1v1h-1zM10 6h1v1h-1zM12 6h1v1h-1zM14 6h1v1h-1zM16 6h1v1h-1zM18 6h7v1h-7zM8 7h1v1h-1zM10 7h1v1h-1zM12 7h1v1h-1zM15 7h2v1h-2zM2 8h3v1h-3zM6 8h1v1h-1zM8 8h4v1h-4zM13 8h7v1h-7zM22 8h3v1h-3zM2 9h1v1h-1zM4 9h1v1h-1zM10 9h1v1h-1zM12 9h1v1h-1zM14 9h2v1h-2zM17 9h1v1h-1zM20 9h3v1h-3zM24 9h1v1h-1zM1 10h2v1h-2zM4 10h3v1h-3zM8 10h1v1h-1zM13 10h1v1h-1zM15 10h1v1h-1zM17 10h1v1h-1zM19 10h3v1h-3zM2 11h1v1h-1zM5 11h1v1h-1zM9 11h1v1h-1zM11 11h1v1h-1zM14 11h2v1h-2zM17 11h2v1h-2zM21 11h1v1h-1zM23 11h1v1h-1zM2 12h2v1h-2zM6 12h2v1h-2zM10 12h2v1h-2zM13 12h1v1h-1zM15 12h1v1h-1zM17 12h1v1h-1zM21 12h1v1h-1zM0 13h1v1h-1zM4 13h1v1h-1zM10 13h1v1h-1zM15 13h2v1h-2zM18 13h1v1h-1zM20 13h3v1h-3zM24 13h1v1h-1zM0 14h1v1h-1zM3 14h2v1h-2zM6 14h1v1h-1zM8 14h3v1h-3zM13 14h2v1h-2zM18 14h1v1h-1zM21 14h1v1h-1zM23 14h2v1h-2zM0 15h1v1h-1zM5 15h1v1h-1zM7 15h2v1h-2zM10 15h3v1h-3zM16 15h1v1h-1zM18 15h1v1h-1zM20 15h2v1h-2zM23 15h2v1h-2zM0 16h1v1h-1zM2 16h1v1h-1zM4 16h1v1h-1zM6 16h1v1h-1zM10 16h2v1h-2zM13 16h2v1h-2zM16 16h5v1h-5zM23 16h1v1h-1zM8 17h1v1h-1zM10 17h1v1h-1zM12 17h1v1h-1zM16 17h1v1h-1zM20 17h2v1h-2zM24 17h1v1h-1zM0 18h7v1h-7zM10 18h1v1h-1zM12 18h1v1h-1zM15 18h2v1h-2zM18 18h1v1h-1zM20 18h1v1h-1zM23 18h1v1h-1zM0 19h1v1h-1zM6 19h1v1h-1zM9 19h3v1h-3zM14 19h3v1h-3zM20 19h1v1h-1zM22 19h3v1h-3zM0 20h1v1h-1zM2 20h3v1h-3zM6 20h1v1h-1zM8 20h3v1h-3zM15 20h6v1h-6zM24 20h1v1h-1zM0 21h1v1h-1zM2 21h3v1h-3zM6 21h1v1h-1zM8 21h1v1h-1zM11 21h2v1h-2zM18 21h1v1h-1zM21 21h1v1h-1zM24 21h1v1h-1zM0 22h1v1h-1zM2 22h3v1h-3zM6 22h1v1h-1zM8 22h4v1h-4zM13 22h3v1h-3zM18 22h2v1h-2zM21 22h1v1h-1zM24 22h1v1h-1zM0 23h1v1h-1zM6 23h1v1h-1zM11 23h2v1h-2zM15 23h1v1h-1zM17 23h1v1h-1zM20 23h1v1h-1zM23 23h2v1h-2zM0 24h7v1h-7zM9 24h1v1h-1zM11 24h1v1h-1zM13 24h1v1h-1zM16 24h1v1h-1zM24 24h1v1h-1z" fill="#000"/></svg>
</body></html>
